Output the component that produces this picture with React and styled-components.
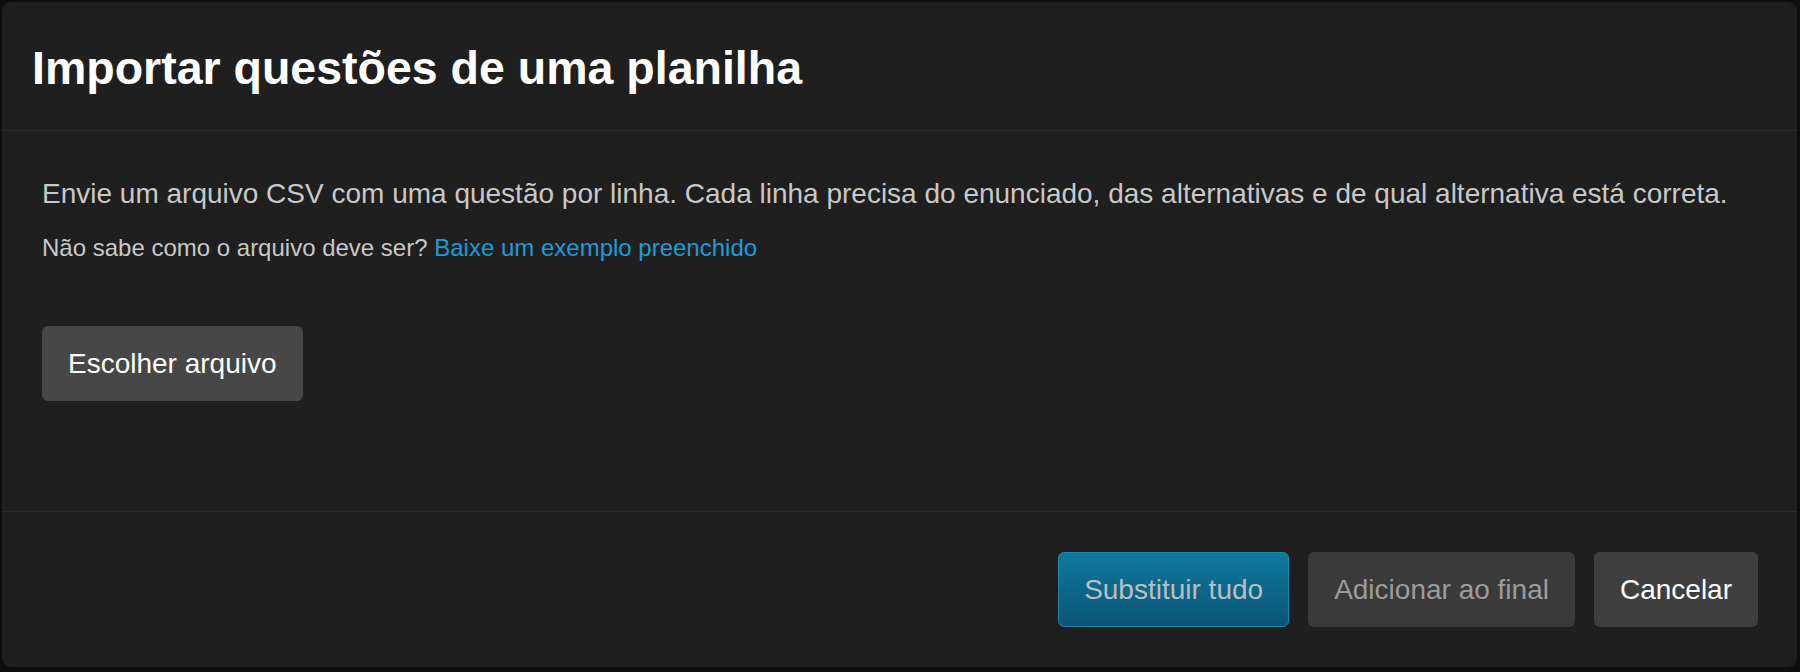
import React from "react";
import styled, { createGlobalStyle } from "styled-components";

const GlobalStyle = createGlobalStyle`
  html, body {
    margin: 0;
    padding: 0;
    background: #0e0e0e;
    font-family: "Liberation Sans", Arial, Helvetica, sans-serif;
  }
  * { box-sizing: border-box; }
`;

const Backdrop = styled.div`
  width: 1800px;
  height: 672px;
  padding: 2px 3px 5px 2px;
  display: flex;
`;

const Modal = styled.div`
  flex: 1;
  display: flex;
  flex-direction: column;
  background: #1f1f1f;
  border-radius: 9px;
  overflow: hidden;
`;

const Header = styled.div`
  padding: 40px 30px 35px;
  border-bottom: 1px solid #2b2b2b;
`;

const Title = styled.h1`
  margin: 0;
  font-size: 46.5px;
  line-height: 53px;
  font-weight: bold;
  color: #ffffff;
`;

const Body = styled.div`
  padding: 43px 40px 110px;
  border-bottom: 1px solid #2b2b2b;
  display: flex;
  flex-direction: column;
  align-items: flex-start;
`;

const Text = styled.p`
  margin: 0;
  font-size: ${(p) => p.size || "28px"};
  line-height: ${(p) => p.lh || "40px"};
  margin-top: ${(p) => p.mt || "0"};
  color: #c8c8c8;
`;

const Link = styled.a`
  color: #1d9bd8;
  text-decoration: none;
`;

const Button = styled.button`
  height: 75px;
  padding: 0 25px;
  border-radius: 6px;
  font-family: "Liberation Sans", Arial, Helvetica, sans-serif;
  font-size: 28px;
  line-height: 32px;
  white-space: nowrap;
  border: 1px solid ${(p) => p.border || "transparent"};
  background: ${(p) => p.bg || "#3a3a3a"};
  color: ${(p) => p.color || "#ffffff"};
  cursor: pointer;
`;

const FileButton = styled(Button)`
  margin-top: 61px;
  background: #474747;
`;

const Footer = styled.div`
  flex: 1;
  display: flex;
  justify-content: flex-end;
  align-items: flex-start;
  gap: 19px;
  padding: 40px 39px 40px;
`;

export default function App() {
  return (
    <>
      <GlobalStyle />
      <Backdrop>
        <Modal>
          <Header>
            <Title>Importar questões de uma planilha</Title>
          </Header>
          <Body>
            <Text>
              Envie um arquivo CSV com uma questão por linha. Cada linha precisa do enunciado, das alternativas e de qual alternativa está correta.
            </Text>
            <Text size="24px" lh="34px" mt="17px">
              Não sabe como o arquivo deve ser? <Link href="#">Baixe um exemplo preenchido</Link>
            </Text>
            <FileButton>Escolher arquivo</FileButton>
          </Body>
          <Footer>
            <Button
              bg="linear-gradient(#0f78a0, #0a5574)"
              border="#2384ab"
              color="#b9bfc3"
            >
              Substituir tudo
            </Button>
            <Button bg="#3a3a3a" color="#9c9c9c">
              Adicionar ao final
            </Button>
            <Button bg="#3f3f3f" color="#ffffff">
              Cancelar
            </Button>
          </Footer>
        </Modal>
      </Backdrop>
    </>
  );
}
